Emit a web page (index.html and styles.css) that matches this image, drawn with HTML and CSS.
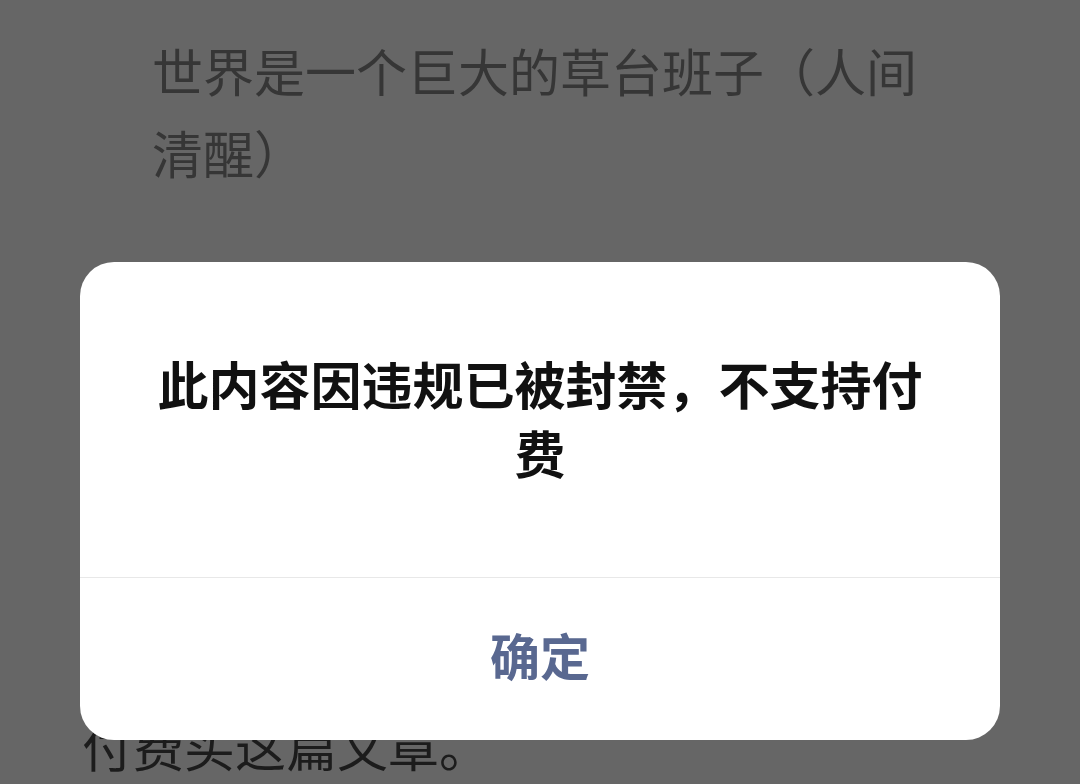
FILE: index.html
```html
<!DOCTYPE html>
<html lang="zh-CN">
<head>
    <meta charset="UTF-8">
    <title>付费文章</title>
    <meta name="viewport" content="width=device-width, initial-scale=1.0">
    <link rel="stylesheet" href="styles.css">
</head>
<body>
    <main class="article">
        <p class="article-quote">世界是一个巨大的草台班子（人间清醒）</p>
        <p class="article-text">付费买这篇文章。</p>
    </main>

    <div class="dialog" role="alertdialog">
        <div class="dialog-body">
            <p class="dialog-title">此内容因违规已被封禁，不支持付费</p>
        </div>
        <button class="dialog-btn" type="button">确定</button>
    </div>
</body>
</html>
```

FILE: styles.css
```css
/* Fondo atenuado de la página bajo el diálogo */
body {
    margin: 0;
    height: 784px;
    overflow: hidden;
    background: #666666;
    font-family: "Noto Sans CJK SC", "Noto Sans", sans-serif;
}

.article {
    padding-top: 29px;
}

.article p {
    margin: 0;
    font-size: 51px;
    line-height: 82px;
}

.article-quote {
    width: 790px;
    padding-left: 152px;
    color: #363636;
}

.article p.article-text {
    margin-top: 511px;
    padding-left: 82px;
    color: #1c1c1c;
}

/* Diálogo */
.dialog {
    position: fixed;
    left: 80px;
    top: 262px;
    width: 920px;
    height: 478px;
    background: #ffffff;
    border-radius: 34px;
    display: flex;
    flex-direction: column;
    overflow: hidden;
}

.dialog-body {
    box-sizing: border-box;
    height: 316px;
    padding: 0 60px 4px;
    display: flex;
    align-items: center;
    justify-content: center;
    border-bottom: 1px solid #e8e8e8;
}

.dialog-title {
    margin: 0;
    font-size: 51px;
    line-height: 69px;
    font-weight: 700;
    color: #111111;
    text-align: center;
}

.dialog-btn {
    flex: 1;
    border: none;
    background: none;
    padding: 0 0 10px;
    font-family: inherit;
    font-size: 50px;
    font-weight: 700;
    color: #596890;
    cursor: pointer;
}
```
